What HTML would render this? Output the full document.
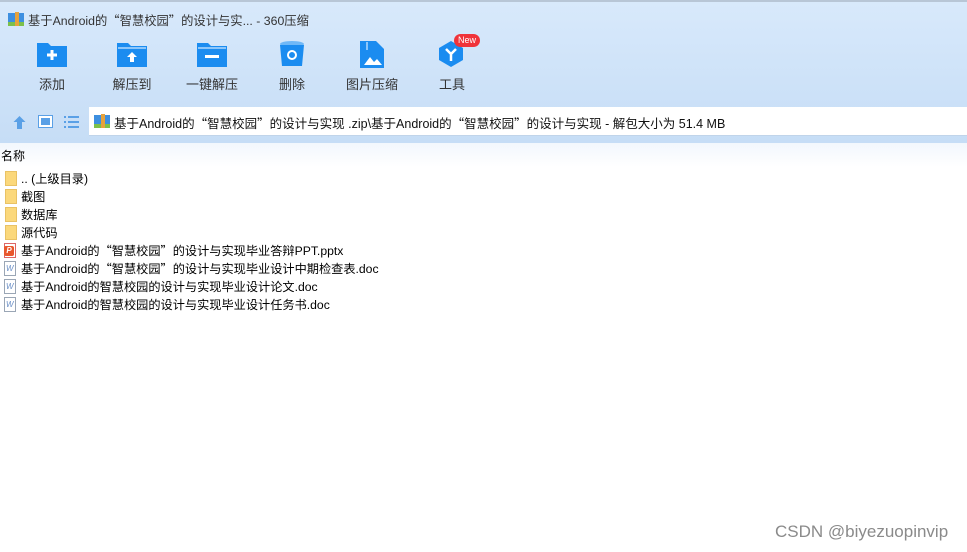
<!DOCTYPE html>
<html><head><meta charset="utf-8"><style>
body{margin:0;width:967px;height:552px;overflow:hidden;background:#fff;font-family:"Liberation Sans","Noto Sans CJK SC",sans-serif;position:relative}
.q{font-family:"Noto Sans CJK SC",sans-serif}
.top{position:absolute;left:0;top:0;width:967px;height:143px;background:linear-gradient(#d8e9fb,#c6ddf6);border-top:2px solid #b8c6d6;box-sizing:border-box}
.title{position:absolute;left:28px;top:9px;font-size:12.3px;color:#333;white-space:nowrap}
.tb{position:absolute;top:38px;width:80px;text-align:center;font-size:13px;color:#333}
.tb svg{display:block;margin:0 auto 6px}
.addr{position:absolute;left:89px;top:107px;width:878px;height:28px;background:#fff;border-bottom:1px solid #c0d4ea}
.addr>span{position:absolute;left:25px;top:6px;font-size:12.5px;color:#111;white-space:nowrap}
.hdr{position:absolute;left:0;top:143px;width:967px;height:24px;background:linear-gradient(#f2f7fd,#fff)}
.hdr span{position:absolute;left:1px;top:4px;font-size:12px;color:#000}
.row{position:absolute;left:4px;height:18px;font-size:12.2px;color:#000}
.row>span{position:absolute;left:17px;top:-1px;white-space:nowrap}
.fold{position:absolute;left:1px;top:1px;width:12px;height:15px;background:#fbd87b;border:1px solid #e9c265;box-sizing:border-box}
.doc{position:absolute;left:0;top:1px;width:12px;height:15px;border:1px solid #9aa6b5;background:#fff;box-sizing:border-box}
.doc:after{content:"W";position:absolute;left:1px;top:2px;font-size:8px;color:#6a8fc6}
.ppt{position:absolute;left:0;top:1px;width:12px;height:15px;border:1px solid #d66;background:#fff;box-sizing:border-box}
.ppt:after{content:"P";position:absolute;left:-1px;top:2px;width:10px;height:10px;background:#e8572d;color:#fff;font-size:8px;font-weight:bold;text-align:center;line-height:10px;border-radius:2px}
.wm{position:absolute;left:775px;top:522px;font-size:17px;color:#8a8a8a;white-space:nowrap}
</style></head><body>
<div class="top">
<svg style="position:absolute;left:8px;top:10px" width="17" height="15"><rect x="0" y="1" width="16" height="9" fill="#3d8fe0"/><rect x="0" y="10" width="16" height="4" fill="#7cc04a"/><rect x="7" y="0" width="4" height="14" fill="#e6a23c"/></svg>
<div class="title">基于Android的<span class="q">“</span>智慧校园<span class="q">”</span>的设计与实... - 360压缩</div>
<div class="tb" style="left:12px"><svg width="32" height="28"><path d="M1 3h11l3 3h16v21H1z" fill="#1b8cf0"/><path d="M16 10v10M11 15h10" stroke="#fff" stroke-width="3"/></svg>添加</div>
<div class="tb" style="left:92px"><svg width="32" height="28"><path d="M1 3h11l3 3h16v21H1z" fill="#1b8cf0"/><rect x="2" y="7" width="28" height="2" fill="#8cc6fa"/><path d="M11 17l5-5 5 5h-3v5h-4v-5z" fill="#fff"/></svg>解压到</div>
<div class="tb" style="left:172px"><svg width="32" height="28"><path d="M1 3h11l3 3h16v21H1z" fill="#1b8cf0"/><rect x="2" y="7" width="28" height="2" fill="#8cc6fa"/><rect x="9" y="15" width="14" height="3" fill="#fff"/></svg>一键解压</div>
<div class="tb" style="left:252px"><svg width="26" height="28"><ellipse cx="13" cy="4" rx="12" ry="3" fill="#6fb8f7"/><path d="M1 5h24l-2 21H3z" fill="#1b8cf0"/><circle cx="13" cy="15" r="4" fill="none" stroke="#fff" stroke-width="2"/></svg>删除</div>
<div class="tb" style="left:332px"><svg width="26" height="28"><path d="M1 1h16l8 8v19H1z" fill="#1b8cf0"/><path d="M5 25l6-8 4 5 3-3 5 6z" fill="#fff"/><rect x="7" y="2" width="2" height="8" fill="#8cc6fa"/></svg>图片压缩</div>
<div class="tb" style="left:412px"><svg width="30" height="28"><path d="M14 1l12 7v12l-12 7-12-7V8z" fill="#1b8cf0"/><path d="M9 9l5 5 5-5M14 14v7" stroke="#fff" stroke-width="2.5" fill="none"/></svg>工具</div>
<div style="position:absolute;left:454px;top:32px;width:26px;height:13px;border-radius:7px;background:#f0333a;color:#fff;font-size:9px;text-align:center;line-height:13px">New</div>
<svg style="position:absolute;left:12px;top:113px" width="15" height="15"><path d="M7.5 1l6 6h-3.5v7h-5V7H1.5z" fill="#5aa0e6"/></svg>
<svg style="position:absolute;left:38px;top:113px" width="15" height="14"><rect x="0.5" y="0.5" width="14" height="12" fill="#fff" stroke="#5aa0e6"/><rect x="3" y="3" width="9" height="7" fill="#5aa0e6"/></svg>
<svg style="position:absolute;left:64px;top:114px" width="15" height="12"><g fill="#5aa0e6"><rect x="0" y="0" width="2" height="2"/><rect x="4" y="0" width="11" height="2"/><rect x="0" y="5" width="2" height="2"/><rect x="4" y="5" width="11" height="2"/><rect x="0" y="10" width="2" height="2"/><rect x="4" y="10" width="11" height="2"/></g></svg>
</div>
<div class="addr"><svg style="position:absolute;left:5px;top:7px" width="17" height="15"><rect x="0" y="1" width="16" height="9" fill="#3d8fe0"/><rect x="0" y="10" width="16" height="4" fill="#7cc04a"/><rect x="7" y="0" width="4" height="14" fill="#e6a23c"/></svg><span>基于Android的<span class="q">“</span>智慧校园<span class="q">”</span>的设计与实现 .zip\基于Android的<span class="q">“</span>智慧校园<span class="q">”</span>的设计与实现 - 解包大小为 51.4 MB</span></div>
<div class="hdr"><span>名称</span></div>
<div class="row" style="top:170px"><i class="fold"></i><span>.. (上级目录)</span></div>
<div class="row" style="top:188px"><i class="fold"></i><span>截图</span></div>
<div class="row" style="top:206px"><i class="fold"></i><span>数据库</span></div>
<div class="row" style="top:224px"><i class="fold"></i><span>源代码</span></div>
<div class="row" style="top:242px"><i class="ppt"></i><span>基于Android的<span class="q">“</span>智慧校园<span class="q">”</span>的设计与实现毕业答辩PPT.pptx</span></div>
<div class="row" style="top:260px"><i class="doc"></i><span>基于Android的<span class="q">“</span>智慧校园<span class="q">”</span>的设计与实现毕业设计中期检查表.doc</span></div>
<div class="row" style="top:278px"><i class="doc"></i><span>基于Android的智慧校园的设计与实现毕业设计论文.doc</span></div>
<div class="row" style="top:296px"><i class="doc"></i><span>基于Android的智慧校园的设计与实现毕业设计任务书.doc</span></div>
<div class="wm">CSDN @biyezuopinvip</div>
</body></html>
